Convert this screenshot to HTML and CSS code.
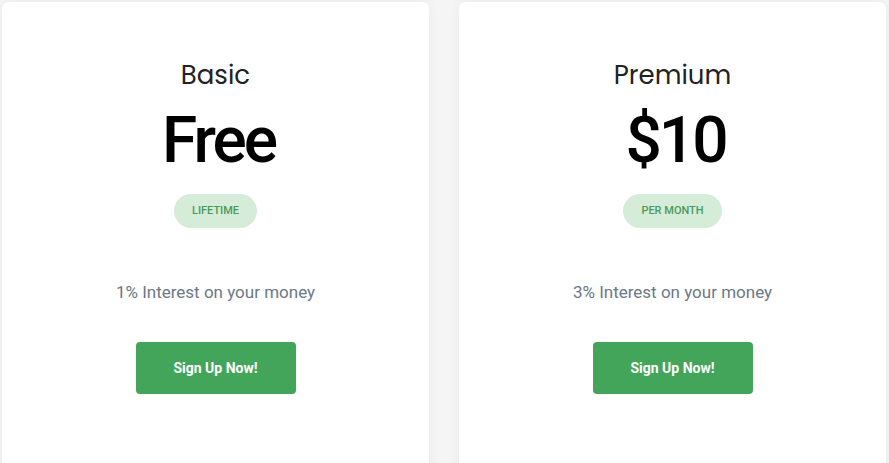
FILE: index.html
```html
<!DOCTYPE html>
<html>
<head>
<meta charset="utf-8">
<link rel="stylesheet" href="styles.css">
</head>
<body>
<div class="plans">
  <div class="card">
    <h2 class="title">Basic</h2>
    <div class="price">Free</div>
    <span class="badge">Lifetime</span>
    <p class="desc">1% Interest on your money</p>
    <a class="btn">Sign Up Now!</a>
  </div>
  <div class="card">
    <h2 class="title">Premium</h2>
    <div class="price">$10</div>
    <span class="badge">Per Month</span>
    <p class="desc">3% Interest on your money</p>
    <a class="btn">Sign Up Now!</a>
  </div>
</div>
</body>
</html>
```
FILE: styles.css
```css
html, body {
  margin: 0;
  padding: 0;
  background: #f5f5f5;
  overflow: hidden;
}
.plans {
  display: flex;
  gap: 30px;
  padding: 2px 3px 0 2px;
  height: 463px;
  box-sizing: border-box;
}
.card {
  flex: 0 0 427px;
  height: 500px;
  background: #fff;
  border-radius: 6px;
  box-shadow: 0 0 12px rgba(0, 0, 0, 0.05);
  display: flex;
  flex-direction: column;
  align-items: center;
  padding-top: 58px;
  box-sizing: border-box;
  font-family: Roboto, "Liberation Sans", sans-serif;
}
.title {
  margin: 0;
  font-family: Poppins, "Open Sans", sans-serif;
  font-weight: 400;
  font-size: 26px;
  line-height: 1.2;
  color: #222;
}
.price {
  margin-top: 17px;
  font-size: 64px;
  line-height: 66px;
  font-weight: 500;
  letter-spacing: -3px;
  color: #000;
  padding-left: 6px;
}
.badge {
  margin-top: 20px;
  height: 34px;
  line-height: 34px;
  padding: 0 18px;
  border-radius: 17px;
  background: #d5ecd9;
  color: #4a9a5a;
  font-size: 11px;
  font-weight: 500;
  text-transform: uppercase;
}
.desc {
  margin: 52px 0 0;
  font-size: 17px;
  line-height: 24px;
  color: #6b7886;
}
.btn {
  margin-top: 38px;
  width: 160px;
  height: 52px;
  line-height: 52px;
  text-align: center;
  background: #43a559;
  color: #fff;
  font-weight: 700;
  font-size: 14px;
  border-radius: 4px;
}
```
